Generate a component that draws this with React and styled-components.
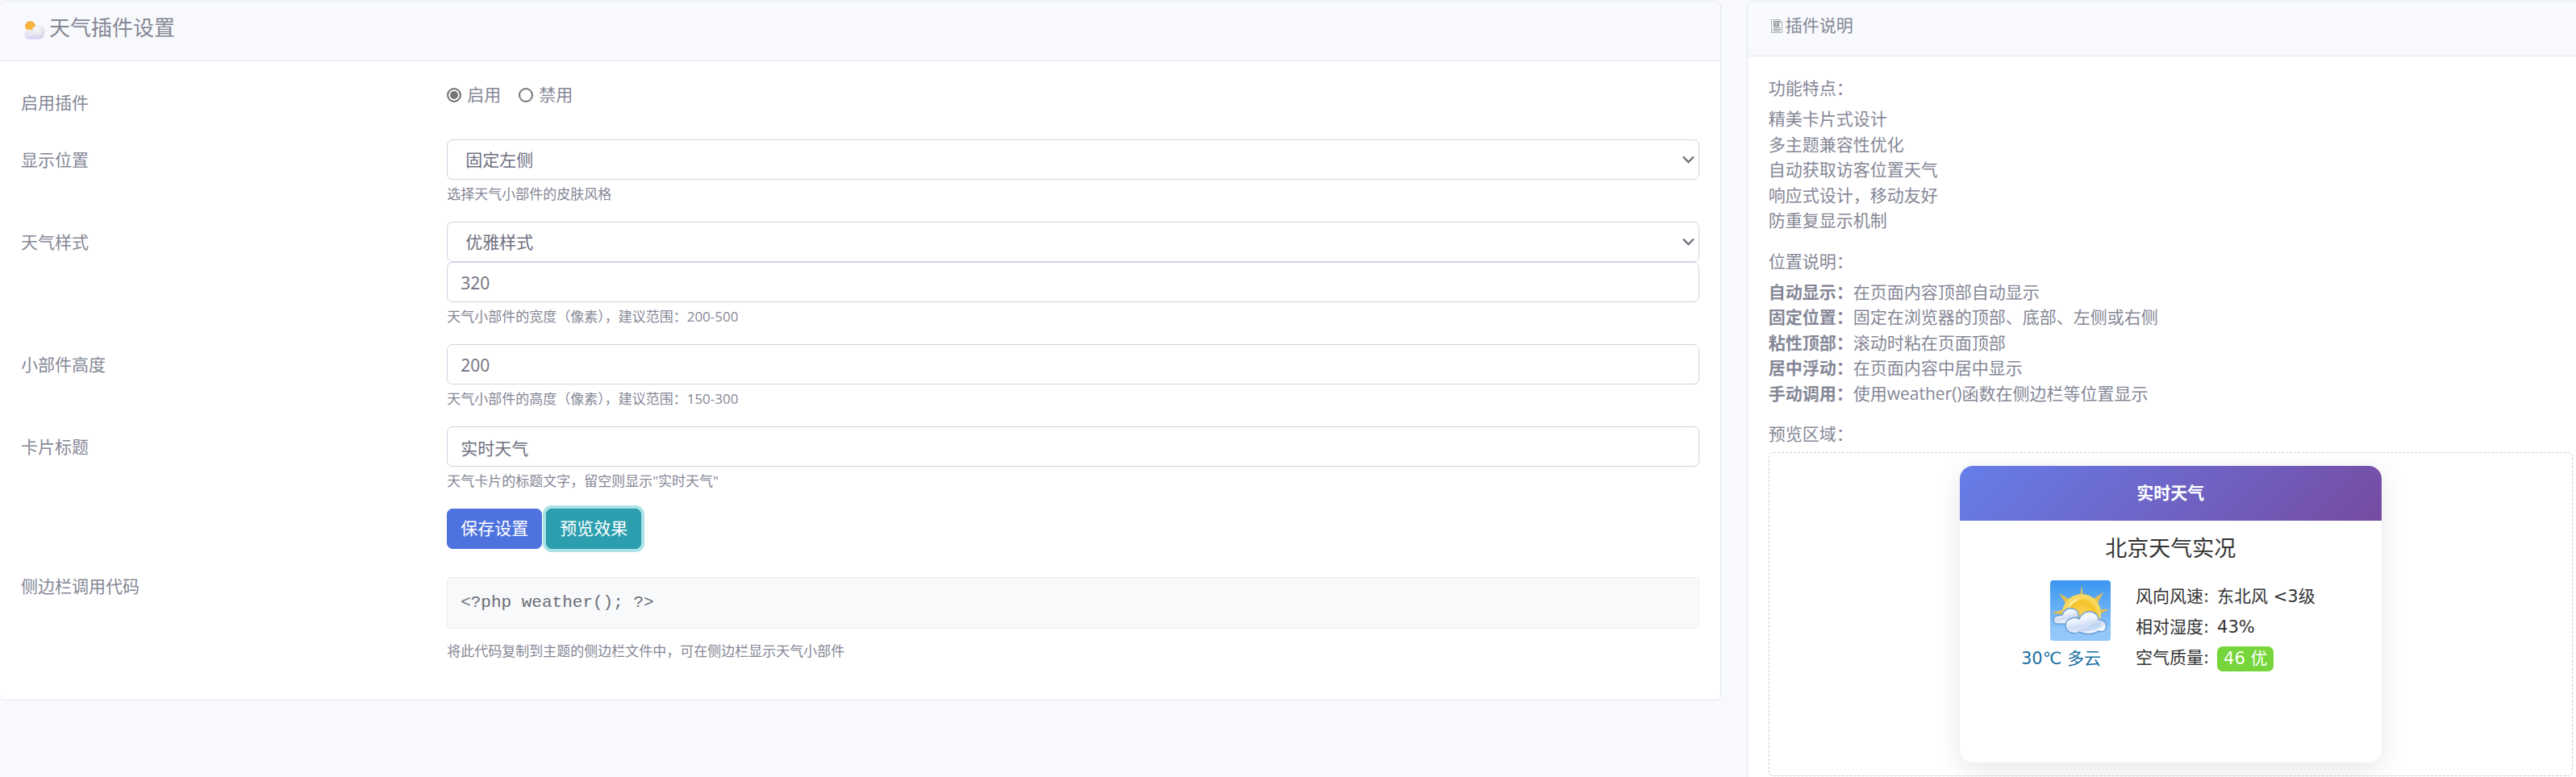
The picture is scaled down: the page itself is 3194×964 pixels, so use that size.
import React from "react";
import styled, { createGlobalStyle, css } from "styled-components";

const GlobalStyle = createGlobalStyle`
  *, *::before, *::after { box-sizing: border-box; }
  body {
    margin: 0;
    background: #f8f9fd;
    color: #858796;
    font-family: "Open Sans", "Noto Sans CJK SC", sans-serif;
    font-size: 21px;
    line-height: 1.5;
  }
`;

const Page = styled.main`
  min-height: 100vh;
  padding-top: 1px;
  overflow-x: hidden;
`;

const Columns = styled.div`
  display: flex;
  align-items: flex-start;
  margin: 0 -39px 0 -17px;
`;

const Column = styled.div`
  flex: 0 0 ${(p) => (p.$wide ? "calc(100% * 2 / 3)" : "calc(100% / 3)")};
  min-width: 0;
  padding: 0 16px;
`;

const Card = styled.section`
  background: #fff;
  border: 1px solid #e3e6f0;
  border-radius: 7px;
  ${(p) => p.$open && css`
    border-bottom: 0;
    border-radius: 7px 7px 0 0;
  `}
`;

const CardHeader = styled.header`
  padding: 17px 26px 25px;
  background: #f8f9fc;
  border-bottom: 1px solid #e3e6f0;
  border-radius: 7px 7px 0 0;
`;

const PageTitle = styled.h1`
  display: flex;
  align-items: center;
  gap: 3px;
  margin: 0;
  font-size: 26px;
  font-weight: 400;
  line-height: 31px;
`;

const SideTitle = styled.h2`
  display: flex;
  align-items: center;
  margin: 0;
  font-size: 21px;
  font-weight: 400;
  line-height: 25px;
`;

const CardBody = styled.div`
  padding: ${(p) => (p.$tight ? "26px 26px 1px" : "26px")};
`;

const Row = styled.div`
  display: flex;
  margin: 0 -16px 21px;
`;

const LabelCell = styled.div`
  flex: 0 0 25%;
  padding: 10px 16px 0;
`;

const FieldCell = styled.div`
  flex: 0 0 75%;
  min-width: 0;
  min-height: 50px;
  padding: 0 16px;
`;

const RadioGroup = styled.div`
  display: flex;
  gap: 22px;
`;

const RadioLabel = styled.label`
  display: flex;
  align-items: center;
  gap: 7px;
`;

const Radio = styled.input`
  appearance: none;
  width: 18px;
  height: 18px;
  margin: 0;
  background: #fff;
  border: 2px solid #767676;
  border-radius: 50%;
  &:checked {
    background: #757575;
    box-shadow: inset 0 0 0 2px #fff;
  }
`;

const control = css`
  display: block;
  width: 100%;
  height: 50px;
  color: #6e707e;
  background: #fff;
  border: 1px solid #d1d3e2;
  border-radius: 7px;
  font: inherit;
`;

const TextInput = styled.input`
  ${control}
  padding: 9px 16px 7px;
`;

const SelectWrap = styled.div`
  display: grid;
  align-items: center;
  & > * { grid-area: 1 / 1; }
  & > svg {
    justify-self: end;
    margin-right: 6px;
    pointer-events: none;
  }
`;

const SelectControl = styled.select`
  ${control}
  appearance: none;
  padding: 9px 22px 7px;
`;

const Help = styled.small`
  display: block;
  margin-top: 5px;
  font-size: 17px;
  line-height: 26px;
`;

const Actions = styled.div`
  display: flex;
  gap: 5px;
`;

const Button = styled.button`
  height: 50px;
  padding: 8px 16px;
  color: #fff;
  background: #4e73df;
  border: 1px solid #4e73df;
  border-radius: 7px;
  font: inherit;
  ${(p) => p.$info && css`
    background: #2c9faf;
    border-color: #2a96a5;
    box-shadow: 0 0 0 4px #a9e2e8;
  `}
`;

const CodeBox = styled.pre`
  margin: 14px 0 15px;
  padding: 16px;
  color: #6a6d76;
  background: #f8f9fa;
  border: 1px solid #e9ecef;
  border-radius: 5px;
  font-family: "Liberation Mono", monospace;
  line-height: 30px;
`;

const SectionTitle = styled.h3`
  margin: 0 0 10px;
  font-size: 21px;
  font-weight: 400;
  line-height: 26px;
`;

const List = styled.ul`
  margin: 0 0 21px;
  padding: 0;
  list-style: none;
`;

const PreviewArea = styled.div`
  display: flex;
  justify-content: center;
  padding: 16px;
  border: 1px dashed #ccc;
  border-radius: 6px;
`;

const Widget = styled.article`
  width: 523px;
  min-height: 368px;
  overflow: hidden;
  color: #333;
  background: #fff;
  border-radius: 16px;
  box-shadow: 0 8px 32px rgba(0, 0, 0, 0.1);
  font-family: "DejaVu Sans", "Noto Sans CJK SC", sans-serif;
`;

const WidgetHeader = styled.header`
  padding: 18px;
  color: #fff;
  background: linear-gradient(135deg, #667eea 0%, #764ba2 100%);
  font-weight: 700;
  line-height: 32px;
  text-align: center;
`;

const City = styled.h4`
  margin: 16px 0 20px;
  font-size: 27px;
  font-weight: 400;
  line-height: 38px;
  text-align: center;
`;

const Weather = styled.div`
  display: flex;
  justify-content: center;
  gap: 31px;
  padding-right: 6px;
`;

const Now = styled.div`
  display: flex;
  flex-direction: column;
  align-items: flex-end;
  gap: 7px;
`;

const Temperature = styled.span`
  padding-right: 12px;
  color: #1a6fa3;
`;

const Facts = styled.dl`
  margin: 0;
  padding-top: 2px;
`;

const Fact = styled.div`
  display: flex;
  align-items: center;
  gap: 10px;
  height: 38px;
`;

const Term = styled.dt``;

const Value = styled.dd`
  margin: 0;
`;

const Badge = styled.span`
  display: block;
  padding: 0 8px;
  color: #fff;
  background: #76d53a;
  border-radius: 7px;
  line-height: 31px;
`;

function Chevron() {
  return (
    <svg width="15" height="10" viewBox="0 0 15 10" fill="none" stroke="#6e707e" strokeWidth="2.4" aria-hidden="true">
      <path d="M1 1.500L7.500 8L14 1.500" />
    </svg>
  );
}

function CloudSunIcon() {
  return (
    <svg width="32" height="31" viewBox="0 0 32 31" aria-hidden="true">
      <defs>
        <linearGradient id="cloud" x1="0" y1="0" x2="0" y2="1">
          <stop offset="0" stopColor="#f1f0f4" />
          <stop offset="0.6" stopColor="#e6e3f0" />
          <stop offset="1" stopColor="#d6ccf8" />
        </linearGradient>
        <radialGradient id="puff" cx="0.4" cy="0.3" r="0.8">
          <stop offset="0" stopColor="#fafafa" />
          <stop offset="0.6" stopColor="#e6e4ec" />
          <stop offset="1" stopColor="#d0cce0" />
        </radialGradient>
      </defs>
      <circle cx="11.500" cy="13.500" r="5.500" fill="#f9b53a" />
      <circle cx="11.500" cy="13.500" r="5.700" fill="none" stroke="#ee9a2c" strokeWidth="1.600" strokeDasharray="2.400 1.200" />
      <path d="M10 29.500C6 29.500 4 26.500 4 23.500C4 20.500 6.500 17.500 10.500 17.500C12.500 17.500 14.500 18.500 15.500 20L29 22C29.500 26 26.500 29.500 22.500 29.500Z" fill="url(#cloud)" />
      <circle cx="21.500" cy="20" r="8" fill="url(#puff)" />
      <path d="M7 28.500C12 26.500 20 28.500 27 25.500C26 28 24 29.500 21.500 29.500H10C9 29.500 8 29 7 28.500Z" fill="#d8cef8" opacity="0.8" />
    </svg>
  );
}

function PageIcon() {
  return (
    <svg width="21" height="25" viewBox="0 0 21 25" fill="none" stroke="#adafb9" aria-hidden="true">
      <path d="M3.500 5.500H13.500L16.500 8.500V21.500H3.500Z" />
      <path d="M13.500 5.500V8.500H16.500" />
      <path d="M6.500 7.500H12.500V13.500H6.500Z" fill="#d0d2da" stroke="#85878f" />
      <path d="M7 13L9.500 10L12 13M8 9.500H9M11 9.500H12" stroke="#85878f" />
      <path d="M5.500 15.500H14.500M5.500 17.500H14.500M5.500 19.500H14.500" stroke="#8f919c" />
    </svg>
  );
}

function WeatherIcon() {
  return (
    <svg width="75" height="75" viewBox="0 0 75 75" role="img" aria-label="多云">
      <defs>
        <linearGradient id="sky" x1="0" y1="0" x2="0" y2="1">
          <stop offset="0" stopColor="#3a96f0" />
          <stop offset="1" stopColor="#9fcdfc" />
        </linearGradient>
        <radialGradient id="sun" cx="0.5" cy="0.55" r="0.5">
          <stop offset="0" stopColor="#fbd55c" />
          <stop offset="0.8" stopColor="#f7c228" />
          <stop offset="1" stopColor="#f9d95e" />
        </radialGradient>
        <linearGradient id="white" x1="0" y1="0" x2="0.4" y2="1">
          <stop offset="0" stopColor="#ffffff" />
          <stop offset="0.45" stopColor="#eef3fd" />
          <stop offset="0.7" stopColor="#cfdcf4" />
          <stop offset="1" stopColor="#f6f9ff" />
        </linearGradient>
      </defs>
      <rect width="75" height="75" rx="4" fill="url(#sky)" />
      <path d="M39 6L41 20H37ZM11 16L25 24L20 30ZM66 15L53 23L58 30ZM2 40L18 36L17 43ZM73 36L59 36L61 42Z" fill="#dfbe55" />
      <circle cx="39" cy="41" r="24" fill="#f8d862" />
      <circle cx="39" cy="41" r="21.500" fill="url(#sun)" />
      <path d="M21 37C23 28 30 23 38 22C31 26 26 30 21 37Z" fill="#fdf0b0" />
      <path d="M0 58H75V71C75 73 73 75 71 75H4C2 75 0 73 0 71Z" fill="#93c6fa" />
      <path d="M9 54C3 54 2 45 9 44C11 43 13 43 15 43C17 36 23 34 28 35C33 36 36 40 35 46C30 46 26 49 22 54Z" fill="url(#white)" stroke="#6a9fd4" strokeWidth="1.500" />
      <path d="M27 65C17 64 17 51 24 48C28 46 33 46 36 48C39 40 47 37 54 40C59 42 60 46 60 49C67 48 71 54 69 60C67 64 63 64 60 63C52 68 42 67 36 64C33 66 30 66 27 65Z" fill="url(#white)" stroke="#6a9fd4" strokeWidth="1.500" />
      <path d="M32 62C42 61 50 56 57 52C61 50 65 54 62 58C58 63 42 65 32 62Z" fill="#b4cdf2" opacity="0.6" />
    </svg>
  );
}

function Select({ id, children }) {
  return (
    <SelectWrap>
      <SelectControl id={id}>{children}</SelectControl>
      <Chevron />
    </SelectWrap>
  );
}

function Field({ id, label, help, children }) {
  return (
    <Row>
      <LabelCell><label htmlFor={id}>{label}</label></LabelCell>
      <FieldCell>
        {children}
        {help && <Help>{help}</Help>}
      </FieldCell>
    </Row>
  );
}

const features = ["精美卡片式设计", "多主题兼容性优化", "自动获取访客位置天气", "响应式设计，移动友好", "防重复显示机制"];

const positions = [
  ["自动显示：", "在页面内容顶部自动显示"],
  ["固定位置：", "固定在浏览器的顶部、底部、左侧或右侧"],
  ["粘性顶部：", "滚动时粘在页面顶部"],
  ["居中浮动：", "在页面内容中居中显示"],
  ["手动调用：", "使用weather()函数在侧边栏等位置显示"],
];

export default function App() {
  return (
    <Page lang="zh-CN">
      <GlobalStyle />
      <Columns>
        <Column $wide>
          <Card>
            <CardHeader>
              <PageTitle><CloudSunIcon />天气插件设置</PageTitle>
            </CardHeader>
            <CardBody>
              <Row role="radiogroup" aria-labelledby="enable-label">
                <LabelCell id="enable-label">启用插件</LabelCell>
                <FieldCell>
                  <RadioGroup>
                    <RadioLabel><Radio type="radio" name="enabled" defaultChecked />启用</RadioLabel>
                    <RadioLabel><Radio type="radio" name="enabled" />禁用</RadioLabel>
                  </RadioGroup>
                </FieldCell>
              </Row>
              <Field id="position" label="显示位置" help="选择天气小部件的皮肤风格">
                <Select id="position"><option>固定左侧</option></Select>
              </Field>
              <Field id="skin" label="天气样式" help="天气小部件的宽度（像素），建议范围：200-500">
                <Select id="skin"><option>优雅样式</option></Select>
                <TextInput aria-label="小部件宽度" defaultValue="320" />
              </Field>
              <Field id="height" label="小部件高度" help="天气小部件的高度（像素），建议范围：150-300">
                <TextInput id="height" defaultValue="200" />
              </Field>
              <Field id="title" label="卡片标题" help={'天气卡片的标题文字，留空则显示"实时天气"'}>
                <TextInput id="title" defaultValue="实时天气" />
              </Field>
              <Row>
                <LabelCell />
                <FieldCell>
                  <Actions>
                    <Button type="submit">保存设置</Button>
                    <Button type="button" $info>预览效果</Button>
                  </Actions>
                </FieldCell>
              </Row>
              <Row>
                <LabelCell>侧边栏调用代码</LabelCell>
                <FieldCell>
                  <CodeBox>{"<?php weather(); ?>"}</CodeBox>
                  <Help>将此代码复制到主题的侧边栏文件中，可在侧边栏显示天气小部件</Help>
                </FieldCell>
              </Row>
            </CardBody>
          </Card>
        </Column>
        <Column>
          <Card $open>
            <CardHeader>
              <SideTitle><PageIcon />插件说明</SideTitle>
            </CardHeader>
            <CardBody $tight>
              <SectionTitle>功能特点：</SectionTitle>
              <List>{features.map((f) => <li key={f}>{f}</li>)}</List>
              <SectionTitle>位置说明：</SectionTitle>
              <List>
                {positions.map(([name, text]) => <li key={name}><strong>{name}</strong>{text}</li>)}
              </List>
              <SectionTitle>预览区域：</SectionTitle>
              <PreviewArea>
                <Widget>
                  <WidgetHeader>实时天气</WidgetHeader>
                  <City>北京天气实况</City>
                  <Weather>
                    <Now>
                      <WeatherIcon />
                      <Temperature>30℃ 多云</Temperature>
                    </Now>
                    <Facts>
                      <Fact><Term>风向风速:</Term><Value>东北风 &lt;3级</Value></Fact>
                      <Fact><Term>相对湿度:</Term><Value>43%</Value></Fact>
                      <Fact><Term>空气质量:</Term><Value><Badge>46 优</Badge></Value></Fact>
                    </Facts>
                  </Weather>
                </Widget>
              </PreviewArea>
            </CardBody>
          </Card>
        </Column>
      </Columns>
    </Page>
  );
}
